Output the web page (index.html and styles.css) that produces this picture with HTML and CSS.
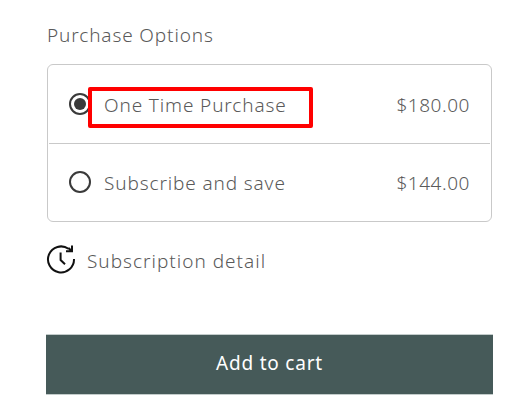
FILE: index.html
```html
<!DOCTYPE html>
<html lang="en">
<head>
<meta charset="utf-8">
<title>Purchase Options</title>
<link rel="stylesheet" href="styles.css">
</head>
<body>
<main class="product-form">
  <h2 class="heading">Purchase Options</h2>
  <div class="options">
    <label class="option">
      <svg class="radio" viewBox="0 0 24 24"><circle cx="12" cy="12" r="10" fill="none" stroke="#3a3a3a" stroke-width="2"/><circle cx="12" cy="12" r="6" fill="#3a3a3a"/></svg>
      <span class="name">One Time Purchase</span>
      <span class="price">$180.00</span>
      <span class="highlight"></span>
    </label>
    <label class="option second">
      <svg class="radio" viewBox="0 0 24 24"><circle cx="12" cy="12" r="10" fill="none" stroke="#3a3a3a" stroke-width="2"/></svg>
      <span class="name">Subscribe and save</span>
      <span class="price">$144.00</span>
    </label>
  </div>
  <div class="detail">
    <svg class="clock" viewBox="0 0 30 30" fill="none" stroke="#111" stroke-width="2"><path d="M22.5 4.8A13 13 0 1 0 28 15M20 7.3H26V1.5M26 7.3L22.5 4M14.6 8.5V16L19 20.3"/></svg>
    <span class="detail-text">Subscription detail</span>
  </div>
  <button class="cart">Add to cart</button>
</main>
</body>
</html>
```

FILE: styles.css
```css
* { box-sizing: border-box; }
body { margin: 0; background: #fff; color: #5a5a5a; font: 350 19px/26px "Noto Sans", "Open Sans", sans-serif; letter-spacing: 0.87px; }
.product-form { width: 447px; margin-left: 46px; padding-top: 22px; }
.heading { margin: 0 0 16px 1px; font-size: inherit; font-weight: inherit; }
.options { width: 445px; margin-left: 1px; border: 1px solid #c9c9c9; border-radius: 6px; }
.option { position: relative; display: flex; align-items: center; height: 78px; margin: 0 1px; padding: 0 20px 0 19px; }
.second { border-top: 1px solid #c9c9c9; padding-bottom: 1px; }
.radio { width: 24px; height: 24px; margin-right: 12px; }
.name, .price { padding-top: 1px; }
.price { margin-left: auto; letter-spacing: 0.55px; }
.highlight { position: absolute; left: 39px; top: 22px; width: 225px; height: 41px; border: 4px solid #f00; border-radius: 2px; }
.detail { display: flex; align-items: center; height: 30px; margin: 22px 0 0; }
.clock { width: 30px; height: 30px; margin-right: 11px; }
.detail-text { padding-top: 3px; letter-spacing: 1px; }
.cart { display: block; width: 447px; height: 61px; margin-top: 60px; padding: 0 0 3px; border: solid #c3cccb; border-width: 1px 0; background: #465a59; color: #fff; font: inherit; font-weight: 400; letter-spacing: 0.8px; }
```
